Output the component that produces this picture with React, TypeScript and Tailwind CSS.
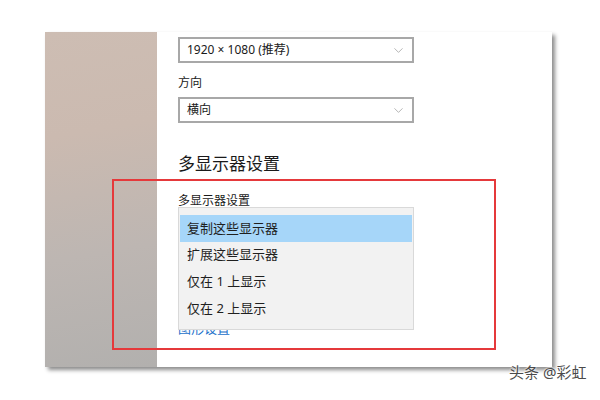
import { ChevronDown } from "lucide-react";

const font = { fontFamily: '"Noto Sans", "Noto Sans CJK SC", sans-serif' };

function Select({ value }: { value: string }) {
  return (
    <div className="flex h-[26px] w-[236px] items-center justify-between border-2 border-[#a8a8a8] bg-white pl-[7px] pr-[6px] text-[12px] text-[#1a1a1a]">
      <span className="leading-none">{value}</span>
      <ChevronDown className="h-[15px] w-[15px] text-[#8a8a8a]" strokeWidth={1} />
    </div>
  );
}

const options = ["复制这些显示器", "扩展这些显示器", "仅在 1 上显示", "仅在 2 上显示"];

export default function App() {
  return (
    <div className="relative h-[400px] w-[600px] overflow-hidden bg-white" style={font}>
      <div className="ml-[45px] mt-[32px] flex h-[335px] w-[507px] shadow-[3px_3px_4px_rgba(0,0,0,0.45)]">
        <div className="w-[112px] bg-[linear-gradient(170deg,#cdbdb3_0%,#cbbab0_30%,#bdb6b2_65%,#b2b0ae_100%)]" />
        <div className="relative flex-1 bg-white pl-[21px] pt-[5px]">
          <Select value="1920 × 1080 (推荐)" />
          <div className="mt-[13px] text-[12px] leading-[14px] text-[#1a1a1a]">方向</div>
          <div className="mt-[7px]">
            <Select value="横向" />
          </div>
          <div className="mt-[31px] text-[17px] leading-[20px] text-[#1a1a1a]">多显示器设置</div>
          <div className="mt-[20px] text-[12px] leading-[14px] text-[#1a1a1a]">多显示器设置</div>
          {/* combobox, covered by its open popup */}
          <div className="mt-[3px] h-[26px] w-[236px] border-2 border-[#a8a8a8]" />
          <div className="mt-[83px] text-[13px] leading-[16px] text-[#1a6fc9]">图形设置</div>

          <div className="absolute left-[21px] top-[175px] w-[236px] border border-[#d9d9d9] bg-[#f2f2f2] px-[1px] pb-[7px] pt-[7px]">
            {options.map((o, i) => (
              <div
                key={o}
                className={`flex h-[26.7px] items-center pl-[7px] text-[13px] text-[#1f1f1f] ${i === 0 ? "bg-[#a6d6f9]" : ""}`}
              >
                {o}
              </div>
            ))}
          </div>
        </div>
      </div>

      <div className="absolute left-[112px] top-[179px] h-[171px] w-[384px] border-2 border-[#e5393b]" />

      <div
        className="absolute left-[509px] top-[362px] text-[15px] leading-[20px] text-[#4a4a4a]"
        style={{ textShadow: "0 0 2px #fff, 0 0 2px #fff" }}
      >
        头条 @彩虹
      </div>
    </div>
  );
}
